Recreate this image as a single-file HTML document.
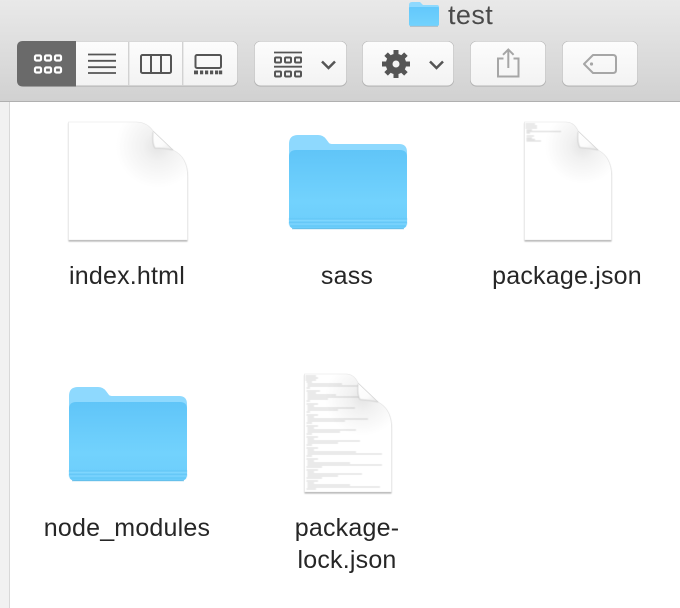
<!DOCTYPE html>
<html><head><meta charset="utf-8">
<style>
html,body{margin:0;padding:0;background:#fff}
body{width:680px;height:608px;position:relative;overflow:hidden;font-family:"Liberation Sans",sans-serif}
svg{position:absolute;left:0;top:0}
.l{position:absolute;color:#262626;font-size:25px;line-height:32px;white-space:nowrap;text-align:center;letter-spacing:.2px;transform:translateX(-50%)}
.t{position:absolute;left:448px;top:-1px;color:#4a4a4a;font-size:27px;line-height:32px;letter-spacing:.4px}
</style></head>
<body>
<svg width="680" height="608" viewBox="0 0 680 608">
<defs>
<linearGradient id="bar" x1="0" y1="0" x2="0" y2="1"><stop offset="0" stop-color="#e9e9e9"/><stop offset="1" stop-color="#d1d1d1"/></linearGradient>
<linearGradient id="btn" x1="0" y1="0" x2="0" y2="1"><stop offset="0" stop-color="#fcfcfc"/><stop offset="1" stop-color="#f3f3f3"/></linearGradient>
<linearGradient id="fb" x1="0" y1="0" x2="0" y2="1"><stop offset="0" stop-color="#60c5f8"/><stop offset=".65" stop-color="#72d2fd"/><stop offset="1" stop-color="#6ccdfb"/></linearGradient>
<linearGradient id="fold" x1="0" y1="0" x2="1" y2="1"><stop offset="0" stop-color="#fff"/><stop offset=".6" stop-color="#fbfbfb"/><stop offset="1" stop-color="#e6e6e6"/></linearGradient>
<linearGradient id="tf" x1="0" y1="0" x2="0" y2="1"><stop offset="0" stop-color="#63c8fb"/><stop offset="1" stop-color="#72d2fd"/></linearGradient>
<radialGradient id="sw" gradientUnits="userSpaceOnUse" cx="158" cy="146" r="42"><stop offset="0" stop-color="#e4e4e4"/><stop offset=".35" stop-color="#f1f1f1"/><stop offset="1" stop-color="#fff"/></radialGradient>
<radialGradient id="sn" gradientUnits="userSpaceOnUse" cx="583" cy="146" r="38"><stop offset="0" stop-color="#e4e4e4"/><stop offset=".35" stop-color="#f1f1f1"/><stop offset="1" stop-color="#fff"/></radialGradient>
<filter id="b" x="-10%" y="-10%" width="120%" height="120%"><feGaussianBlur stdDeviation=".7"/></filter>
<filter id="b2"><feGaussianBlur stdDeviation=".4"/></filter>
<filter id="b4" x="-20%" y="-20%" width="140%" height="140%"><feGaussianBlur stdDeviation=".4"/></filter>
<g id="folder">
<path d="M289 144Q289 135 298 135H318Q323 135 326 139L329 143Q330 144 333 144H399Q407 144 407 152V222Q407 229 400 229H296Q289 229 289 222Z" fill="#8ed9fe"/>
<path d="M289 157Q289 150 296 150H400Q407 150 407 157V222Q407 229 400 229H296Q289 229 289 222Z" fill="url(#fb)"/>
<g filter="url(#b4)">
<path d="M289 219H407" stroke="#5fc3f4" stroke-width="1"/>
<path d="M289 220.500H407" stroke="#8adcff" stroke-width="1"/>
<path d="M289 222.500H407" stroke="#5fc3f4" stroke-width="1"/>
<path d="M289 224H407" stroke="#84d8ff" stroke-width="1"/>
<path d="M290 226H406" stroke="#62c6f6" stroke-width="1"/>
</g>
<path d="M292 228.800H404" stroke="#60b4de" stroke-width="1" opacity=".7"/>
</g>
<g id="docw">
<path d="M68.500 122H136Q147 122 153 131L173 150Q187.500 157 187.500 176V240.500H68.500Z" fill="#aaa" filter="url(#b)" transform="translate(0 1)"/>
<path d="M68.500 122H136Q147 122 153 131L173 150Q187.500 157 187.500 176V240H68.500Z" fill="url(#sw)" stroke="#e6e6e6" stroke-width=".6"/>
<path d="M153 131Q152 144 155 148Q163 148 173 150Z" fill="url(#fold)"/>
<path d="M153 132Q152 144 155 148Q163 148 173 150" fill="none" stroke="#c8c8c8" stroke-width=".8" filter="url(#b4)"/>
<path d="M153 131L173 150" fill="none" stroke="#d6d6d6" stroke-width=".7"/>
</g>
<g id="docn">
<path d="M524.500 122H566Q574 122 578 131L598 150Q611.500 157 611.500 176V240.500H524.500Z" fill="#aaa" filter="url(#b)" transform="translate(0 1)"/>
<path d="M524.500 122H566Q574 122 578 131L598 150Q611.500 157 611.500 176V240H524.500Z" fill="url(#sn)" stroke="#e6e6e6" stroke-width=".6"/>
</g>
<g id="dfold">
<path d="M578 131Q577 143 580 147.500Q588 148 598 150Z" fill="url(#fold)"/>
<path d="M578 132Q577 143 580 147.500Q588 148 598 150" fill="none" stroke="#c8c8c8" stroke-width=".8" filter="url(#b4)"/>
<path d="M578 131L598 150" fill="none" stroke="#d6d6d6" stroke-width=".7"/>
</g>
</defs>

<!-- toolbar -->
<rect width="680" height="101" fill="url(#bar)"/>
<rect y="101" width="680" height="1" fill="#b0b0b0"/>
<rect y="102" width="9" height="506" fill="#f1f1f1"/>
<rect x="9" y="102" width="1" height="506" fill="#d8d8d8"/>

<!-- title folder -->
<path d="M409 5Q409 2 412 2H420L423 5H437Q439 5 439 7V24Q439 26 437 26H411Q409 26 409 24Z" fill="#8ed9fe"/>
<path d="M409 8Q409 7 410 7H438Q439 7 439 8V24Q439 26 437 26H411Q409 26 409 24Z" fill="url(#tf)"/>
<path d="M410 26.300H438" stroke="#a5b7c2" stroke-width=".8"/>

<!-- segmented -->
<rect x="17" y="41" width="221" height="45.600" rx="6.500" fill="#b4b4b4"/>
<rect x="17.600" y="41.500" width="219.800" height="44" rx="6" fill="url(#btn)"/>
<path d="M23 41H76V86.500H23Q17 86.500 17 80.500V47Q17 41 23 41Z" fill="#6a6a6a"/>
<rect x="128" y="42" width="1.400" height="44" fill="#d2d2d2"/>
<rect x="182" y="42" width="1.400" height="44" fill="#d2d2d2"/>
<g fill="none" stroke="#fff" stroke-width="2.200">
<rect x="35" y="55.500" width="6" height="5" rx="1.300"/><rect x="45" y="55.500" width="6" height="5" rx="1.300"/><rect x="55" y="55.500" width="6" height="5" rx="1.300"/>
<rect x="35" y="67.500" width="6" height="5" rx="1.300"/><rect x="45" y="67.500" width="6" height="5" rx="1.300"/><rect x="55" y="67.500" width="6" height="5" rx="1.300"/>
</g>
<path d="M88 54.500H116M88 60.800H116M88 67.200H116M88 73H116" stroke="#555" stroke-width="1.800"/>
<g fill="none" stroke="#555" stroke-width="2">
<rect x="141" y="55" width="30" height="18" rx="1.500"/>
<path d="M151 55V73M161 55V73"/>
<rect x="195.500" y="55" width="25.500" height="13" rx="1.500"/>
</g>
<g fill="#555"><rect x="194" y="70.500" width="4" height="3.800"/><rect x="200" y="70.500" width="3.200" height="3.800"/><rect x="205" y="70.500" width="3.200" height="3.800"/><rect x="210" y="70.500" width="3.200" height="3.800"/><rect x="215" y="70.500" width="3.200" height="3.800"/><rect x="219" y="70.500" width="3.200" height="3.800"/></g>

<!-- group button -->
<rect x="254" y="41" width="93" height="45.600" rx="6.500" fill="#b4b4b4"/>
<rect x="254.600" y="41.500" width="91.800" height="44" rx="6" fill="url(#btn)"/>
<path d="M274 52.500H302M274 66.700H302" stroke="#555" stroke-width="1.800"/>
<g fill="none" stroke="#555" stroke-width="2">
<rect x="275" y="57.500" width="6" height="5" rx="1"/><rect x="285" y="57.500" width="6" height="5" rx="1"/><rect x="295" y="57.500" width="6" height="5" rx="1"/>
<rect x="275" y="71.500" width="6" height="5" rx="1"/><rect x="285" y="71.500" width="6" height="5" rx="1"/><rect x="295" y="71.500" width="6" height="5" rx="1"/>
</g>
<path d="M322 61.500L328.500 68L335 61.500" fill="none" stroke="#555" stroke-width="2.500"/>

<!-- gear button -->
<rect x="362" y="41" width="92" height="45.600" rx="6.500" fill="#b4b4b4"/>
<rect x="362.600" y="41.500" width="90.800" height="44" rx="6" fill="url(#btn)"/>
<circle cx="396" cy="64" r="7" fill="none" stroke="#555" stroke-width="6.500"/>
<g stroke="#555" stroke-width="5">
<path d="M396 50V78M382 64H410M386.100 54.100L405.900 73.900M405.900 54.100L386.100 73.900"/>
</g>
<circle cx="396" cy="64" r="4.500" fill="#555"/>
<circle cx="396" cy="64" r="3.500" fill="#f4f4f4"/>
<path d="M430 61.500L436.500 68L443 61.500" fill="none" stroke="#555" stroke-width="2.500"/>

<!-- share button -->
<rect x="470" y="41" width="76" height="45.600" rx="6.500" fill="#b4b4b4"/>
<rect x="470.600" y="41.500" width="74.800" height="44" rx="6" fill="url(#btn)"/>
<path d="M503.500 58.500H498V76.500H518.500V58.500H513.500" fill="none" stroke="#a6a6a6" stroke-width="2"/>
<path d="M508.300 50V68M503 54.800L508.300 49.500L513.600 54.800" fill="none" stroke="#a6a6a6" stroke-width="2"/>

<!-- tag button -->
<rect x="562" y="41" width="76" height="45.600" rx="6.500" fill="#b4b4b4"/>
<rect x="562.600" y="41.500" width="74.800" height="44" rx="6" fill="url(#btn)"/>
<path d="M593 55H613Q616 55 616 58V70Q616 73 613 73H593L584 64Z" fill="none" stroke="#a6a6a6" stroke-width="2" stroke-linejoin="round"/>
<circle cx="591.500" cy="64" r="1.600" fill="#a6a6a6"/>

<!-- doc index.html -->
<use href="#docw"/>

<!-- sass -->
<use href="#folder"/>

<!-- package.json -->
<use href="#docn"/>
<use href="#dfold"/>
<g stroke="#8a8a8a" stroke-width=".6" filter="url(#b2)" opacity=".7">
<path d="M525.500 124H535M525.500 126H537M525.500 128H537M526.500 130H532M526.500 131.500H561M526.500 133H530M526.500 136H534M526.500 138H532M526.500 139.500H535M526.500 141H541"/>
</g>

<!-- node_modules -->
<use href="#folder" transform="translate(-220 252)"/>

<!-- package-lock.json -->
<use href="#docn" transform="translate(-220 252)"/>
<g stroke="#777" stroke-width=".6" filter="url(#b2)" opacity=".6">
<path d="M305.500 376H316M305.500 378H318M305.500 380H316M306.500 382H312M307.500 384H342M307.500 386H360M306.500 388H310"/>
<path d="M306.500 391H320M307.500 393H316M307.500 395H336M307.500 397H360M307.500 399H328M306.500 401H310"/>
<path d="M306.500 404H318M307.500 406H314M307.500 408H355M307.500 410H338M306.500 412H310"/>
<path d="M306.500 415H318M307.500 417H314M307.500 419H368M307.500 421H345M306.500 423H312"/>
<path d="M306.500 426H318M307.500 428H314M307.500 430H356M307.500 432H340M306.500 434H312"/>
<path d="M306.500 437H318M307.500 439H314M307.500 441H360M307.500 443H338M306.500 445H312"/>
<path d="M306.500 448H318M307.500 450H314M307.500 452H356M307.500 454H382M306.500 456H312"/>
<path d="M306.500 459H318M307.500 461H314M307.500 463H350M307.500 465H382M306.500 467H322"/>
<path d="M306.500 470H318M307.500 472H314M307.500 474H362M307.500 476H338M306.500 478H322"/>
<path d="M306.500 481H318M307.500 483H314M307.500 485H350M307.500 487H380M306.500 489H316"/>
</g>
<use href="#dfold" transform="translate(-220 252)"/>
</svg>

<div class="t">test</div>
<div class="l" style="left:127px;top:260px">index.html</div>
<div class="l" style="left:347px;top:260px">sass</div>
<div class="l" style="left:567px;top:260px">package.json</div>
<div class="l" style="left:127px;top:512px">node_modules</div>
<div class="l" style="left:347px;top:512px">package-<br>lock.json</div>
</body></html>
